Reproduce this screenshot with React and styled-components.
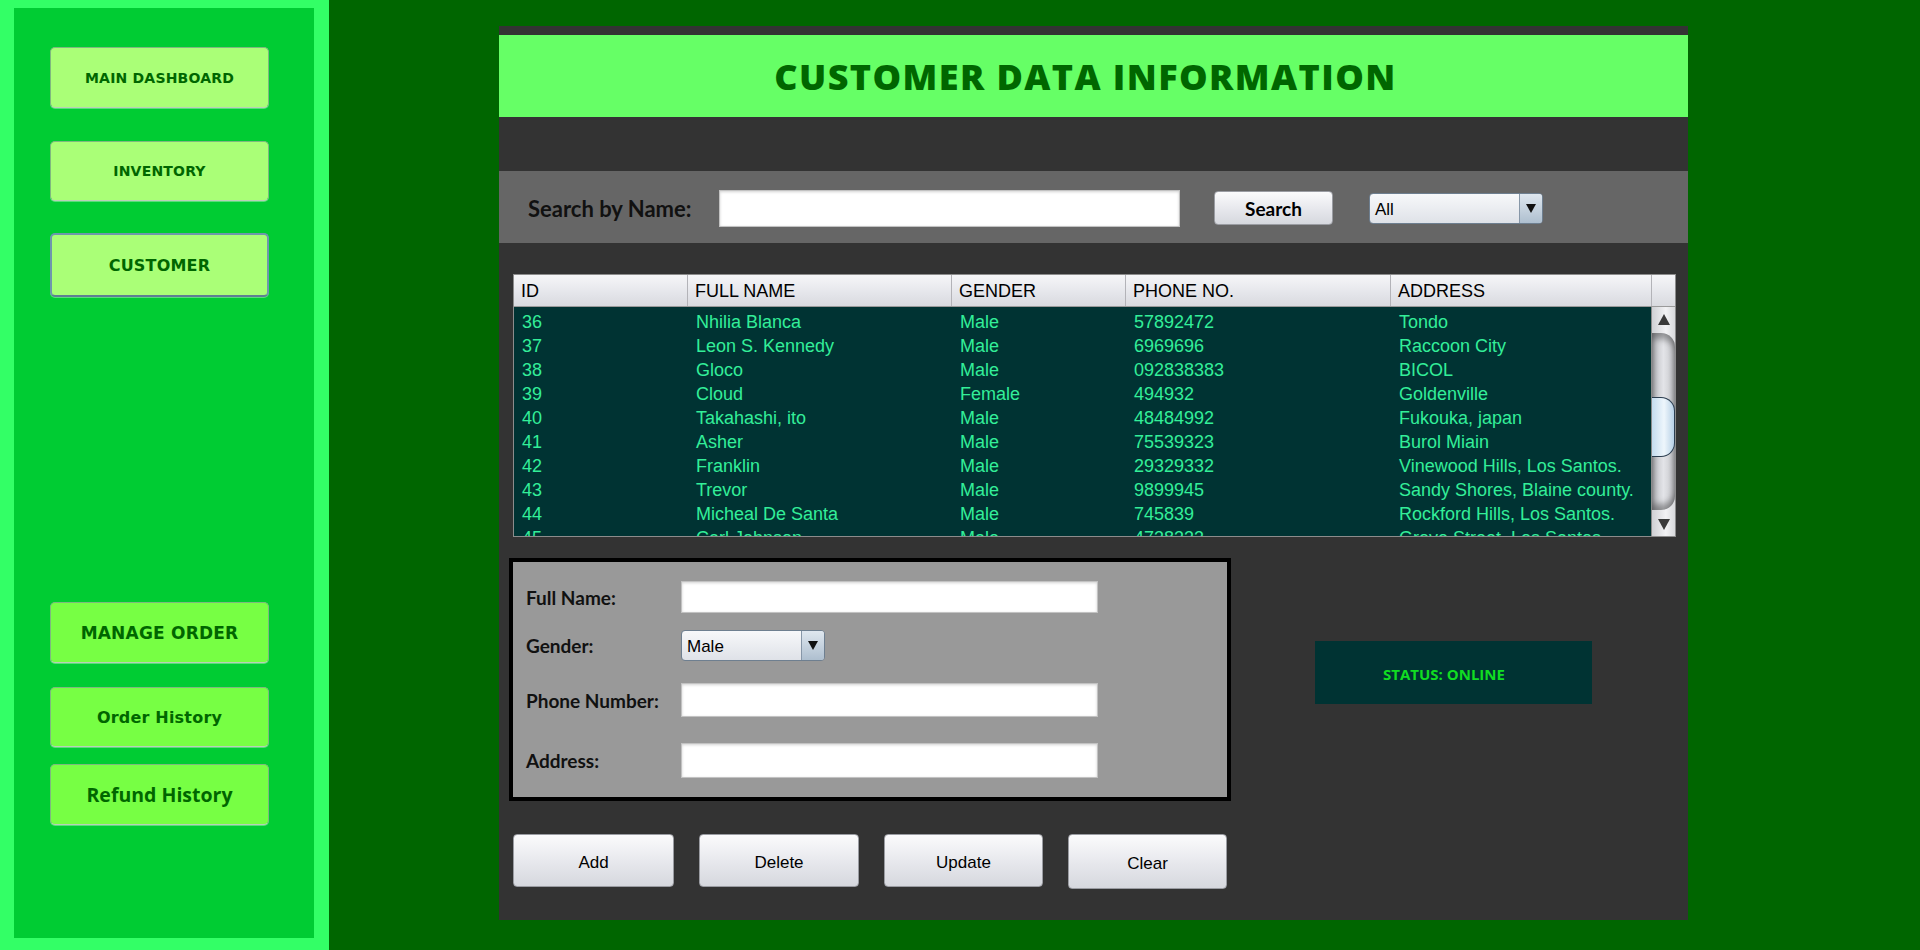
import React from 'react'
import styled, { createGlobalStyle } from 'styled-components'

const GlobalStyle = createGlobalStyle`
  html, body {
    margin: 0;
    padding: 0;
    background: #006600;
  }
  * {
    box-sizing: border-box;
  }
`

const Screen = styled.div`
  display: flex;
  width: 1920px;
  height: 950px;
  overflow: hidden;
  background: #006600;
`

const Sidebar = styled.div`
  width: 329px;
  flex-shrink: 0;
  background: #33ff66;
  padding: 8px 15px 12px 14px;
`

const SideInner = styled.div`
  height: 100%;
  background: #00cc33;
  display: flex;
  flex-direction: column;
  padding-left: 36px;
`

const NavButton = styled.div`
  width: 219px;
  height: ${(p) => p.$h || 61}px;
  margin-top: ${(p) => p.$top}px;
  display: flex;
  align-items: center;
  justify-content: center;
  background: ${(p) => p.$bg};
  border: ${(p) => (p.$active ? '2px solid #6f97ad' : '1px solid #7fb87f')};
  border-bottom-color: ${(p) => (p.$active ? '#5e7f94' : '#b9cfb9')};
  border-radius: 5px;
  box-shadow: 0 1px 0 rgba(255, 255, 255, 0.35);
  color: #006600;
  font-family: ${(p) => (p.$alt ? '"Open Sans", sans-serif' : '"DejaVu Sans", sans-serif')};
  font-weight: 700;
  font-size: ${(p) => p.$size}px;
  letter-spacing: ${(p) => (p.$alt ? '0' : '0.2px')};
`

const Main = styled.div`
  flex: 1;
  padding: 26px 0 0 170px;
`

const Panel = styled.div`
  width: 1189px;
  height: 894px;
  background: #333333;
  padding-top: 9px;
  display: flex;
  flex-direction: column;
`

const Header = styled.div`
  height: 82px;
  background: #66ff66;
  display: flex;
  align-items: center;
  justify-content: center;
  padding-right: 16px;
`

const Title = styled.h1`
  margin: 0;
  font-family: 'Open Sans', sans-serif;
  font-weight: 800;
  font-size: 36px;
  letter-spacing: 1.4px;
  color: #006600;
`

const SearchBar = styled.div`
  margin-top: 54px;
  height: 72px;
  background: #666666;
  display: grid;
  grid-template-columns: 191px 495px 155px 174px;
  align-items: center;
  padding-left: 29px;
  padding-top: 2px;
`

const BarLabel = styled.span`
  font-family: Lato, sans-serif;
  font-weight: 700;
  font-size: 22px;
  color: #111;
`

const TextField = styled.div`
  width: ${(p) => p.$w}px;
  height: ${(p) => p.$h}px;
  background: #ffffff;
  border: 1px solid #c2c2c2;
  box-shadow: inset 0 1px 3px rgba(0, 0, 0, 0.18);
`

const PlainButton = styled.div`
  width: ${(p) => p.$w}px;
  height: ${(p) => p.$h}px;
  display: flex;
  align-items: center;
  justify-content: center;
  padding-top: ${(p) => (p.$bold ? 0 : 4)}px;
  background: linear-gradient(#fbfbfc, #e6e7ec 55%, #d6d8de);
  border: 1px solid #9a9ca2;
  border-radius: 4px;
  color: #000;
  font-family: ${(p) => (p.$bold ? 'Lato, sans-serif' : '"Liberation Sans", Arial, sans-serif')};
  font-weight: ${(p) => (p.$bold ? 700 : 400)};
  font-size: ${(p) => p.$size}px;
`

const Combo = styled.div`
  width: ${(p) => p.$w}px;
  height: ${(p) => p.$h}px;
  display: flex;
  border: 1px solid #6e7f90;
  border-radius: 4px;
  overflow: hidden;
  background: linear-gradient(#f7f8fa, #dfe2e8);
  font-family: 'Liberation Sans', Arial, sans-serif;
  font-size: ${(p) => p.$size}px;
  color: #000;
`

const ComboText = styled.span`
  flex: 1;
  display: flex;
  align-items: center;
  padding: 3px 0 0 5px;
`

const ComboArrow = styled.span`
  width: 23px;
  display: flex;
  align-items: center;
  justify-content: center;
  border-left: 1px solid #8797a8;
  background: linear-gradient(#dfe7ef, #aebfcf);

  &::after {
    content: '';
    border-left: 5px solid transparent;
    border-right: 5px solid transparent;
    border-top: 9px solid #111;
  }
`

const Table = styled.div`
  margin: 31px 12px 0 14px;
  height: 263px;
  border: 1px solid #8c8c8c;
  display: flex;
  flex-direction: column;
  font-family: 'Liberation Sans', Arial, sans-serif;
  font-size: 18px;
`

const HeadRow = styled.div`
  display: grid;
  grid-template-columns: 174px 264px 174px 265px 261px 1fr;
  height: 32px;
  background: linear-gradient(#f6f6f8, #e4e5ea 60%, #d9dadf);
  border-bottom: 1px solid #9a9a9a;
`

const HeadCell = styled.div`
  display: flex;
  align-items: center;
  padding: 2px 0 0 7px;
  border-right: 1px solid #b3b3b8;
  color: #000;

  &:last-child {
    border-right: none;
  }
`

const Body = styled.div`
  flex: 1;
  display: flex;
  min-height: 0;
  background: #003333;
`

const Rows = styled.div`
  flex: 1;
  overflow: hidden;
  padding-top: 3px;
`

const Row = styled.div`
  display: grid;
  grid-template-columns: 174px 264px 174px 265px 1fr;
  height: 24px;
  line-height: 24px;
  color: #33ee99;
`

const Cell = styled.div`
  padding-left: 8px;
  white-space: nowrap;
`

const ScrollBar = styled.div`
  width: 24px;
  display: flex;
  flex-direction: column;
  background: linear-gradient(90deg, #cfd0d4, #f2f2f4 60%, #d8d9dc);
  border-left: 1px solid #8c8c8c;
`

const ScrollArrow = styled.div`
  height: 24px;
  display: flex;
  align-items: center;
  justify-content: center;

  &::after {
    content: '';
    border-left: 6px solid transparent;
    border-right: 6px solid transparent;
    ${(p) => (p.$up ? 'border-bottom: 11px solid #3a3a3a;' : 'border-top: 11px solid #3a3a3a;')}
  }
`

const Track = styled.div`
  flex: 1;
  margin: 2px 0;
  border-radius: 0 14px 14px 0;
  background: linear-gradient(90deg, #b9babf, #e3e4e8 50%, #c2c3c7);
  box-shadow: inset 0 6px 6px rgba(0, 0, 0, 0.35), inset 0 -6px 6px rgba(0, 0, 0, 0.35);
  display: flex;
  flex-direction: column;
`

const Thumb = styled.div`
  margin-top: 64px;
  height: 60px;
  border: 1.5px solid #2c3e50;
  border-left: none;
  border-radius: 0 14px 14px 0;
  background: linear-gradient(90deg, #c4dcef, #eef6fc 55%, #b7d0e6);
`

const Lower = styled.div`
  display: flex;
  margin-top: 21px;
  padding-left: 10px;
`

const FormBox = styled.div`
  width: 722px;
  height: 243px;
  border: 4px solid #000;
  background: #999999;
  padding: 19px 0 0 13px;
  display: flex;
  flex-direction: column;
`

const FormRow = styled.div`
  display: grid;
  grid-template-columns: 155px auto;
  align-items: center;
  justify-content: start;
  margin-top: ${(p) => p.$top || 0}px;
`

const FormLabel = styled.span`
  font-family: Lato, sans-serif;
  font-weight: 700;
  font-size: 19px;
  color: #111;
`

const StatusBox = styled.div`
  width: 277px;
  height: 63px;
  margin: 83px 0 0 84px;
  background: #003333;
  display: flex;
  align-items: center;
  padding: 2px 0 0 68px;
  font-family: 'Open Sans', sans-serif;
  font-weight: 700;
  font-size: 15px;
  color: #11dd22;
`

const ButtonRow = styled.div`
  display: flex;
  gap: 25px;
  margin-top: 33px;
  padding-left: 14px;
`

const customers = [
  ['36', 'Nhilia Blanca', 'Male', '57892472', 'Tondo'],
  ['37', 'Leon S. Kennedy', 'Male', '6969696', 'Raccoon City'],
  ['38', 'Gloco', 'Male', '092838383', 'BICOL'],
  ['39', 'Cloud', 'Female', '494932', 'Goldenville'],
  ['40', 'Takahashi, ito', 'Male', '48484992', 'Fukouka, japan'],
  ['41', 'Asher', 'Male', '75539323', 'Burol Miain'],
  ['42', 'Franklin', 'Male', '29329332', 'Vinewood Hills, Los Santos.'],
  ['43', 'Trevor', 'Male', '9899945', 'Sandy Shores, Blaine county.'],
  ['44', 'Micheal De Santa', 'Male', '745839', 'Rockford Hills, Los Santos.'],
  ['45', 'Carl Johnson', 'Male', '4738333', 'Grove Street, Los Santos.'],
]

const columns = ['ID', 'FULL NAME', 'GENDER', 'PHONE NO.', 'ADDRESS', '']

function App() {
  return (
    <>
      <GlobalStyle />
      <Screen>
        <Sidebar>
          <SideInner>
            <NavButton $top={39} $bg="#aaff77" $size={14}>MAIN DASHBOARD</NavButton>
            <NavButton $top={33} $h={60} $bg="#aaff77" $size={14}>INVENTORY</NavButton>
            <NavButton $top={32} $h={64} $bg="#aaff77" $size={16} $active>CUSTOMER</NavButton>
            <NavButton $top={305} $bg="#77ff44" $size={17}>MANAGE ORDER</NavButton>
            <NavButton $top={24} $h={60} $bg="#77ff44" $size={16}>Order History</NavButton>
            <NavButton $top={17} $bg="#77ff44" $size={19.5} $alt>Refund History</NavButton>
          </SideInner>
        </Sidebar>

        <Main>
          <Panel>
            <Header>
              <Title>CUSTOMER DATA INFORMATION</Title>
            </Header>

            <SearchBar>
              <BarLabel>Search by Name:</BarLabel>
              <TextField $w={461} $h={37} />
              <PlainButton $w={119} $h={34} $size={19} $bold>Search</PlainButton>
              <Combo $w={174} $h={31} $size={17}>
                <ComboText>All</ComboText>
                <ComboArrow />
              </Combo>
            </SearchBar>

            <Table>
              <HeadRow>
                {columns.map((c, i) => (
                  <HeadCell key={i}>{c}</HeadCell>
                ))}
              </HeadRow>
              <Body>
                <Rows>
                  {customers.map((r) => (
                    <Row key={r[0]}>
                      {r.map((v, i) => (
                        <Cell key={i}>{v}</Cell>
                      ))}
                    </Row>
                  ))}
                </Rows>
                <ScrollBar>
                  <ScrollArrow $up />
                  <Track>
                    <Thumb />
                  </Track>
                  <ScrollArrow />
                </ScrollBar>
              </Body>
            </Table>

            <Lower>
              <FormBox>
                <FormRow>
                  <FormLabel>Full Name:</FormLabel>
                  <TextField $w={417} $h={32} />
                </FormRow>
                <FormRow $top={17}>
                  <FormLabel>Gender:</FormLabel>
                  <Combo $w={144} $h={31} $size={17}>
                    <ComboText>Male</ComboText>
                    <ComboArrow />
                  </Combo>
                </FormRow>
                <FormRow $top={22}>
                  <FormLabel>Phone Number:</FormLabel>
                  <TextField $w={417} $h={34} />
                </FormRow>
                <FormRow $top={26}>
                  <FormLabel>Address:</FormLabel>
                  <TextField $w={417} $h={35} />
                </FormRow>
              </FormBox>
              <StatusBox>STATUS: ONLINE</StatusBox>
            </Lower>

            <ButtonRow>
              <PlainButton $w={161} $h={53} $size={17}>Add</PlainButton>
              <PlainButton $w={160} $h={53} $size={17}>Delete</PlainButton>
              <PlainButton $w={159} $h={53} $size={17}>Update</PlainButton>
              <PlainButton $w={159} $h={55} $size={17}>Clear</PlainButton>
            </ButtonRow>
          </Panel>
        </Main>
      </Screen>
    </>
  )
}

export default App
